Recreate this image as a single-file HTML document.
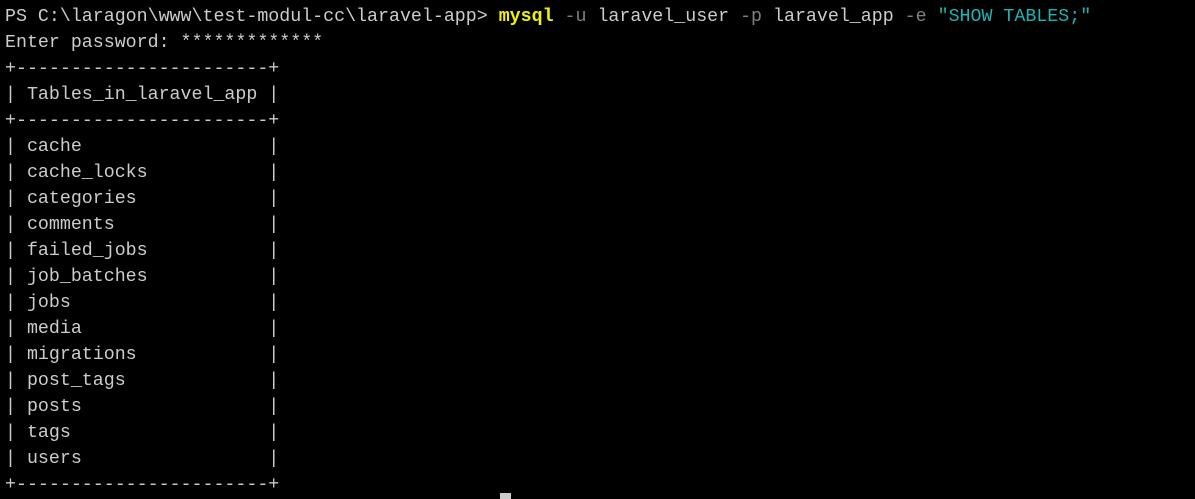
<!DOCTYPE html>
<html><head><style>
html,body{margin:0;padding:0;background:#000;width:1195px;height:499px;overflow:hidden}
pre{margin:0;position:absolute;left:5px;top:4px;font-family:"Liberation Mono",monospace;font-size:18.3px;line-height:26px;color:#cccccc;white-space:pre}
.y{color:#f2f200;font-weight:bold}.g{color:#808080}.c{color:#1cb4b4}
.cur{position:absolute;left:500px;top:493px;width:11px;height:6px;background:#cccccc}
</style></head><body>
<pre>PS C:\laragon\www\test-modul-cc\laravel-app&gt; <span class="y">mysql</span> <span class="g">-u</span> laravel_user <span class="g">-p</span> laravel_app <span class="g">-e</span> <span class="c">"SHOW TABLES;"</span>
Enter password: *************
+-----------------------+
| Tables_in_laravel_app |
+-----------------------+
| cache                 |
| cache_locks           |
| categories            |
| comments              |
| failed_jobs           |
| job_batches           |
| jobs                  |
| media                 |
| migrations            |
| post_tags             |
| posts                 |
| tags                  |
| users                 |
+-----------------------+</pre>
<div class="cur"></div>
</body></html>
